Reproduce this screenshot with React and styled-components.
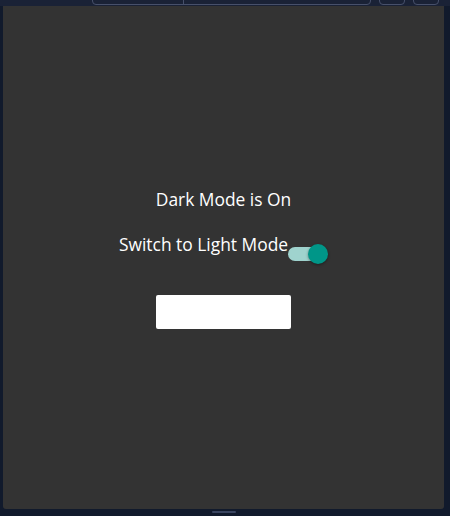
import React, { useState } from "react";
import styled, { createGlobalStyle } from "styled-components";

const GlobalStyle = createGlobalStyle`
  html, body {
    margin: 0;
    padding: 0;
    background: #111a2c;
    font-family: "Segoe UI", "Open Sans", "Noto Sans", sans-serif;
  }
`;

const Frame = styled.div`
  width: 450px;
  height: 516px;
  display: flex;
  flex-direction: column;
  background: #111a2c;
  box-sizing: border-box;
`;

const TopStrip = styled.div`
  height: 6px;
  background: #1a2236;
  display: flex;
  align-items: flex-end;
  overflow: hidden;
  padding-left: 92px;
  gap: 8px;
`;

/* bottom edges of the toolbar fields peeking in from above */
const FieldEdge = styled.div`
  width: ${(p) => p.$w}px;
  height: 12px;
  margin-bottom: 1px;
  border: 1px solid #47506a;
  border-radius: 4px;
  box-sizing: border-box;
  display: flex;
  flex-shrink: 0;
`;

const FieldPart = styled.div`
  width: ${(p) => p.$w}px;
  border-right: 1px solid #47506a;
`;

const Panel = styled.main`
  margin: 0 6px 0 3px;
  height: 503px;
  background: #333333;
  border-radius: 0 0 3px 3px;
  display: flex;
  flex-direction: column;
  align-items: center;
  justify-content: center;
  color: #ffffff;
  padding-top: 2px;
  box-sizing: border-box;
`;

const Status = styled.p`
  margin: 0 0 23px;
  font-size: 17.4px;
  line-height: 22px;
`;

const SwitchRow = styled.label`
  display: flex;
  align-items: flex-end;
  font-size: 17.4px;
  line-height: 22px;
  cursor: pointer;
`;

const Track = styled.span`
  position: relative;
  width: 34px;
  height: 14px;
  border-radius: 7px;
  background: ${(p) => (p.$on ? "#9fd3ce" : "#9e9e9e")};
  margin: 0 6px -6px 0;
`;

const Thumb = styled.span`
  position: absolute;
  top: -3px;
  left: ${(p) => (p.$on ? "20px" : "-3px")};
  width: 20px;
  height: 20px;
  border-radius: 50%;
  background: ${(p) => (p.$on ? "#009688" : "#fafafa")};
  box-shadow: 0 1px 3px rgba(0, 0, 0, 0.4);
`;

const Field = styled.div`
  margin-top: 40px;
  width: 135px;
  height: 34px;
  background: #ffffff;
  border-radius: 2px;
`;

const Handle = styled.div`
  align-self: center;
  width: 24px;
  height: 2px;
  margin-top: 2px;
  background: #3a4560;
  border-radius: 1px;
  margin-left: -3px;
`;

export default function App() {
  const [dark, setDark] = useState(true);

  return (
    <>
      <GlobalStyle />
      <Frame>
        <TopStrip>
          <FieldEdge $w={279}>
            <FieldPart $w={90} />
          </FieldEdge>
          <FieldEdge $w={26} />
          <FieldEdge $w={26} />
        </TopStrip>
        <Panel>
          <Status>{dark ? "Dark Mode is On" : "Light Mode is On"}</Status>
          <SwitchRow onClick={() => setDark(!dark)}>
            {dark ? "Switch to Light Mode" : "Switch to Dark Mode"}
            <Track $on={dark}>
              <Thumb $on={dark} />
            </Track>
          </SwitchRow>
          <Field />
        </Panel>
        <Handle />
      </Frame>
    </>
  );
}
